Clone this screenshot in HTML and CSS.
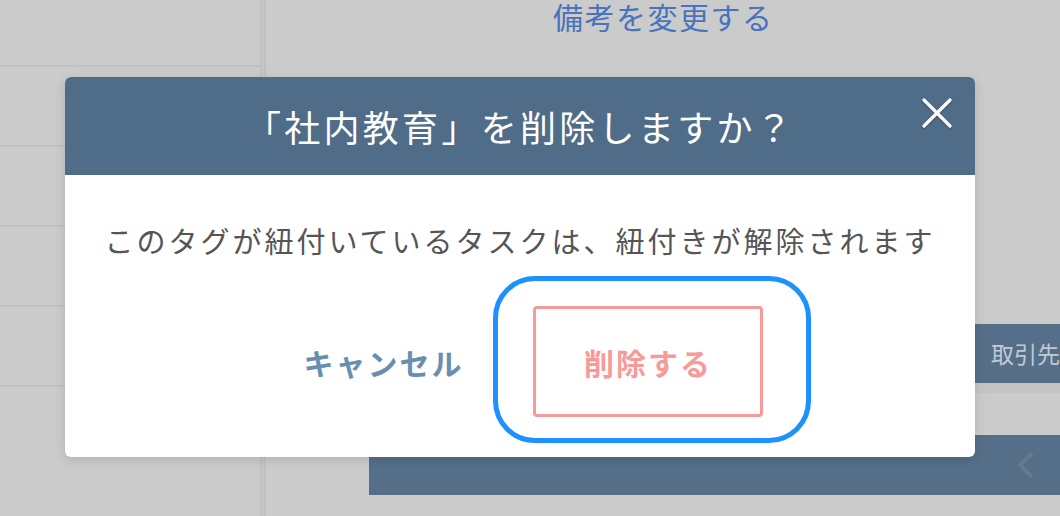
FILE: index.html
```html
<!DOCTYPE html>
<html lang="ja">
<head>
  <meta charset="UTF-8">
  <title>タグの削除</title>
  <link rel="stylesheet" href="styles.css">
</head>
<body>

<div class="page">
  <div class="sidebar">
    <div class="row row-first"></div>
    <div class="row"></div>
    <div class="row"></div>
    <div class="row"></div>
    <div class="row"></div>
  </div>
  <div class="divider"></div>
  <div class="main">
    <a class="memo-link" href="#">備考を変更する</a>
    <div class="client-bar">取引先</div>
    <div class="client-band"></div>
    <div class="pager-bar">
      <svg class="pager-prev" width="20" height="30" viewBox="0 0 20 30">
        <polyline points="16,3 4,15 16,27" stroke="#647b92" stroke-width="4" fill="none"/>
      </svg>
    </div>
  </div>
</div>

<div class="modal">
  <div class="modal-header">
    <h2 class="modal-title">「社内教育」を削除しますか？</h2>
    <button class="modal-close" aria-label="閉じる">
      <svg width="30" height="30" viewBox="0 0 30 30">
        <path d="M2 2 L28 28 M28 2 L2 28" stroke="#fff" stroke-width="3.2" stroke-linecap="round" fill="none"/>
      </svg>
    </button>
  </div>
  <div class="modal-body">
    <p class="modal-message">このタグが紐付いているタスクは、紐付きが解除されます</p>
    <div class="modal-actions">
      <button class="btn-cancel">キャンセル</button>
      <button class="btn-delete">削除する</button>
    </div>
  </div>
</div>

</body>
</html>
```

FILE: styles.css
```css
body {
  margin: 0;
  width: 1060px;
  height: 516px;
  overflow: hidden;
  background-color: #cbcbcb;
  font-family: "Noto Sans CJK JP", "Noto Sans", sans-serif;
  position: relative;
}

.page {
  display: flex;
  height: 516px;
}

.sidebar {
  width: 266px;
}

.row {
  height: 78px;
  border-bottom: 2px solid #c1c1c1;
}

.row-first {
  height: 65px;
}

.divider {
  width: 2px;
  border-left: 2px solid #c1c1c1;
  border-right: 2px solid #c1c1c1;
  background: #c7c7c7;
}

.main {
  flex: 1;
  display: flex;
  flex-direction: column;
}

.memo-link {
  margin: 0 0 0 287px;
  font-size: 30px;
  letter-spacing: 1.5px;
  color: #4774bd;
  text-decoration: none;
  line-height: 33px;
}

.client-bar {
  margin: 291px 0 0 703px;
  height: 59px;
  background: #556f89;
  color: #c3c9d0;
  font-size: 23px;
  line-height: 59px;
  padding-left: 22px;
  white-space: nowrap;
  overflow: hidden;
}

.client-band {
  margin-left: 703px;
  height: 10px;
  background: #c4c4c4;
}

.pager-bar {
  margin: 42px 0 0 103px;
  height: 60px;
  background: #556f89;
  display: flex;
  justify-content: flex-end;
  align-items: center;
  padding-right: 24px;
}

/* modal */
.modal {
  position: absolute;
  left: 65px;
  top: 77px;
  width: 910px;
  background: white;
  border-radius: 6px;
  box-shadow: 0 3px 12px rgba(0, 0, 0, 0.12);
}

.modal-header {
  position: relative;
  height: 98px;
  background: #4f6c89;
  border-radius: 6px 6px 0 0;
  display: flex;
  align-items: center;
  justify-content: center;
}

.modal-title {
  margin: 0;
  font-size: 36px;
  font-weight: normal;
  letter-spacing: 3.3px;
  color: white;
}

.modal-close {
  position: absolute;
  right: 23px;
  top: 21px;
  padding: 0;
  border: none;
  background: none;
  width: 30px;
  height: 30px;
  filter: drop-shadow(0 1px 1px rgba(0, 0, 0, 0.3));
}

.modal-body {
  padding: 44px 0 40px;
}

.modal-message {
  margin: 0;
  text-align: center;
  font-size: 29px;
  letter-spacing: 3px;
  line-height: 42px;
  color: #555;
}

.modal-actions {
  margin-top: 45px;
  display: flex;
  justify-content: center;
  gap: 43px;
}

.btn-cancel,
.btn-delete {
  font-family: inherit;
  font-size: 30px;
  font-weight: bold;
  letter-spacing: 2px;
  background: none;
  cursor: pointer;
}

.btn-cancel {
  width: 213px;
  border: none;
  color: #688eb0;
}

.btn-delete {
  position: relative;
  width: 230px;
  height: 111px;
  border: 3px solid #f99a9a;
  border-radius: 4px;
  color: #f99a9a;
}

.btn-delete::after {
  content: "";
  position: absolute;
  left: -43px;
  right: -51px;
  top: -33px;
  bottom: -29px;
  border: 5px solid #1e90ff;
  border-radius: 42px;
}
```
